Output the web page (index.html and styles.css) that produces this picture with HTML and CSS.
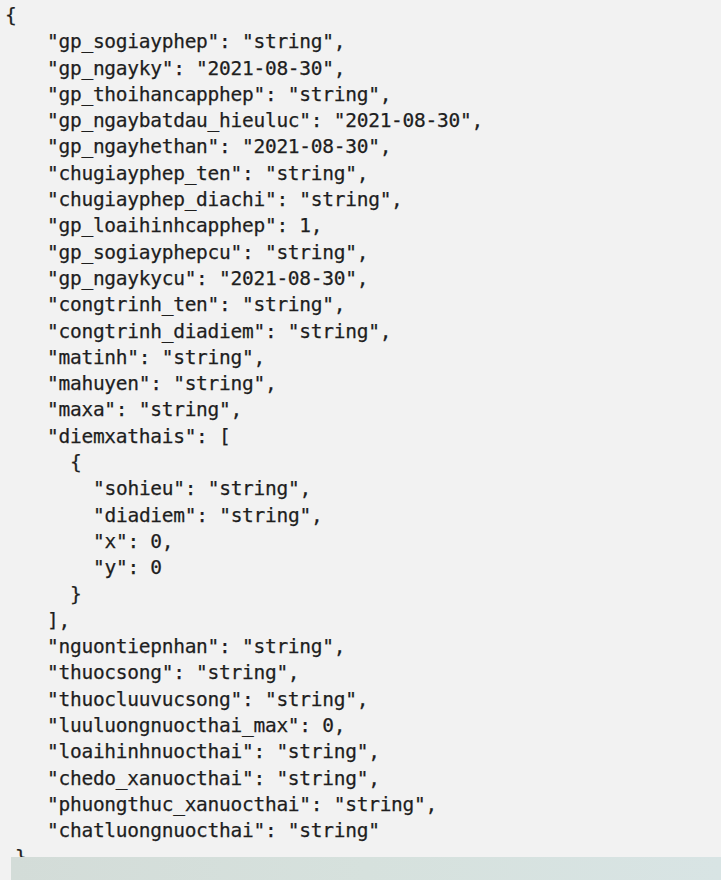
FILE: index.html
```html
<!DOCTYPE html>
<html lang="en">
<head>
<meta charset="utf-8">
<title>JSON schema</title>
<link rel="stylesheet" href="styles.css">
</head>
<body>
<div class="page">
  <div class="code">
    <div class="ln l0">{</div>
    <div class="ln l1">"gp_sogiayphep": "string",</div>
    <div class="ln l1">"gp_ngayky": "2021-08-30",</div>
    <div class="ln l1">"gp_thoihancapphep": "string",</div>
    <div class="ln l1">"gp_ngaybatdau_hieuluc": "2021-08-30",</div>
    <div class="ln l1">"gp_ngayhethan": "2021-08-30",</div>
    <div class="ln l1">"chugiayphep_ten": "string",</div>
    <div class="ln l1">"chugiayphep_diachi": "string",</div>
    <div class="ln l1">"gp_loaihinhcapphep": 1,</div>
    <div class="ln l1">"gp_sogiayphepcu": "string",</div>
    <div class="ln l1">"gp_ngaykycu": "2021-08-30",</div>
    <div class="ln l1">"congtrinh_ten": "string",</div>
    <div class="ln l1">"congtrinh_diadiem": "string",</div>
    <div class="ln l1">"matinh": "string",</div>
    <div class="ln l1">"mahuyen": "string",</div>
    <div class="ln l1">"maxa": "string",</div>
    <div class="ln l1">"diemxathais": [</div>
    <div class="ln l2">{</div>
    <div class="ln l3">"sohieu": "string",</div>
    <div class="ln l3">"diadiem": "string",</div>
    <div class="ln l3">"x": 0,</div>
    <div class="ln l3">"y": 0</div>
    <div class="ln l2">}</div>
    <div class="ln l1">],</div>
    <div class="ln l1">"nguontiepnhan": "string",</div>
    <div class="ln l1">"thuocsong": "string",</div>
    <div class="ln l1">"thuocluuvucsong": "string",</div>
    <div class="ln l1">"luuluongnuocthai_max": 0,</div>
    <div class="ln l1">"loaihinhnuocthai": "string",</div>
    <div class="ln l1">"chedo_xanuocthai": "string",</div>
    <div class="ln l1">"phuongthuc_xanuocthai": "string",</div>
    <div class="ln l1">"chatluongnuocthai": "string"</div>
    <div class="ln lend">}</div>
  </div>
  <div class="bar"></div>
</div>
</body>
</html>
```

FILE: styles.css
```css
html, body {
  margin: 0;
  padding: 0;
  background: #f2f2f2;
}

.page {
  width: 721px;
  height: 880px;
  overflow: hidden;
  position: relative;
  background: #f2f2f2;
}

.code {
  padding-top: 3px;
  font-family: "DejaVu Sans Mono", "Liberation Mono", monospace;
  font-size: 19.5px;
  letter-spacing: -0.27px;
  color: #1e1e1e;
  -webkit-text-stroke: 0.25px #1e1e1e;
}

.ln {
  height: 26.3px;
  line-height: 26.3px;
  white-space: pre;
}

.l0 { padding-left: 5px; }
.l1 { padding-left: 47px; }
.l2 { padding-left: 70px; }
.l3 { padding-left: 93px; }
.lend { padding-left: 15px; }

.bar {
  position: absolute;
  left: 11px;
  right: 0;
  top: 857px;
  height: 23px;
  background: linear-gradient(90deg, #d3dcd8 0%, #d6e1dd 50%, #d8e4e4 100%);
}
```
